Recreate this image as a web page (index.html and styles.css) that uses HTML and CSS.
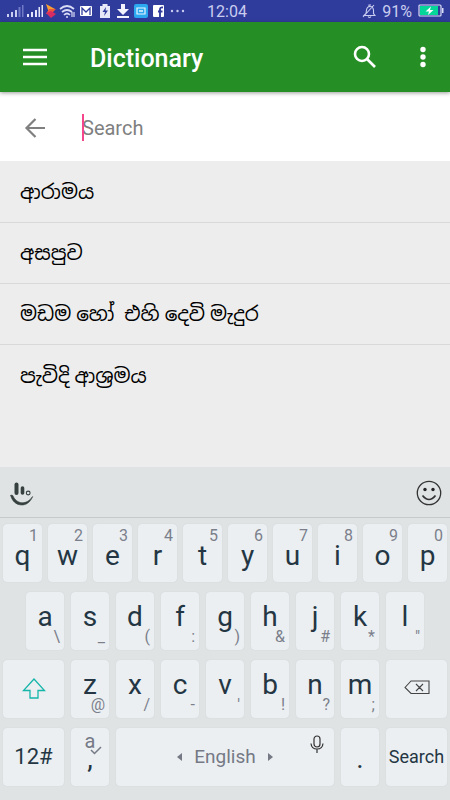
FILE: index.html
```html
<!DOCTYPE html>
<html lang="en">
<head>
<meta charset="utf-8">
<meta name="viewport" content="width=device-width, initial-scale=1">
<title>Dictionary</title>
<link rel="stylesheet" href="styles.css">
</head>
<body>
<div class="status">
  <div class="status-icons">
    <svg width="19" height="16" viewBox="0 0 19 16"><path fill="#c9cdf0" d="M1 11h2v3H1zM5 9h2v5H5zM9 7h2v7H9z"/><path fill="#6f79c6" d="M12.500 4h2v10h-2zM16 2h1.500v12H16z"/></svg>
    <svg width="18" height="16" viewBox="0 0 18 16"><path fill="#e4e7fb" d="M1 11h2v3H1zM5 9h2v5H5zM9 7h2v7H9zM12.500 4h1.500v10h-1.500zM15.500 2h1.500v12h-1.500z"/></svg>
    <svg width="12" height="16" viewBox="0 0 12 16"><path fill="#f6a033" d="M1 1l9 5-6 4z"/><path fill="#f0583a" d="M4 6l7 0-4 4-6 1z"/><path fill="#d92c63" d="M1 10l5-2 5 3-5 4z"/></svg>
    <svg width="19" height="16" viewBox="0 0 19 16" fill="none" stroke="#d9dcf5" stroke-width="1.700"><path d="M2 6Q9 0 16 6M4 9q5-4 10 0M6 12q3-3 6 0"/><circle cx="9" cy="14" r="1" fill="#d9dcf5" stroke="none"/><path stroke-width="1.200" d="M14 9v5M16 9v5"/></svg>
    <svg width="18" height="16" viewBox="0 0 18 16"><rect x="2" y="3" width="12" height="10" rx="1" fill="#fff"/><path d="M4 12V5l4 4 4-4v7" fill="none" stroke="#303c9c" stroke-width="1.300"/></svg>
    <svg width="17" height="16" viewBox="0 0 17 16"><path fill="#e6e8f8" d="M5.500 1h5v2H13v12H3V3h2.500z"/><path fill="#303c9c" d="M9 4L5.500 9H8l-1 4 4-5.500H8.500z"/></svg>
    <svg width="17" height="16" viewBox="0 0 17 16"><path fill="#f2f3fc" d="M6 1h4v5h4l-6 6-6-6h4zM2 13h12v2H2z"/></svg>
    <svg width="18" height="16" viewBox="0 0 18 16"><rect x="1" y="1" width="14" height="14" rx="2" fill="#2ba8f0"/><path d="M4 5h8v6H4z" fill="none" stroke="#e7f6ff" stroke-width="1.200"/><path d="M6 8h4" stroke="#e7f6ff" stroke-width="1.500"/></svg>
    <svg width="15" height="16" viewBox="0 0 15 16"><rect x="1" y="2" width="11" height="12" rx="1" fill="#fff"/><path d="M11 4.500q-3-.5-3 2V14M6 8.500h4.500" fill="none" stroke="#303c9c" stroke-width="1.900"/></svg>
    <svg width="22" height="16" viewBox="0 0 22 16" fill="#c9cdf0"><circle cx="4" cy="8" r="1.200"/><circle cx="9.500" cy="8" r="1.200"/><circle cx="15" cy="8" r="1.200"/></svg>
  </div>
  <time class="clock">12:04</time>
  <div class="status-right">
    <svg width="14" height="16" viewBox="0 0 14 16" fill="none" stroke="#c9cdf0" stroke-width="1.100"><path d="M2 12.500h11l-1.500-2V7Q11 3.500 8 3.500 5 3.500 4.500 7L4 10.500zM7 3.500V2h2M6 13.500q1.500 2 3 0M1 14L12 2"/></svg>
    <span>91%</span>
    <svg width="26" height="14" viewBox="0 0 26 14"><rect x="1" y="1" width="22" height="11" rx="1" fill="#303c9c" stroke="#d9dcf5" stroke-width="1.200"/><path fill="#05d598" d="M2 2h18v9H2z"/><path fill="#d9dcf5" d="M24 4h1.500v5H24z"/><path fill="#fff" d="M13 2.500L7.500 7.500H11l-1 3.500 5.500-5H12z"/></svg>
  </div>
</div>

<header class="appbar">
  <button class="icon-btn" aria-label="Menu"><svg width="24" height="24" viewBox="0 0 24 24" stroke="#fff" stroke-width="2.300"><path d="M0 5h24M0 12h24M0 19h24"/></svg></button>
  <h1>Dictionary</h1>
  <button class="icon-btn" aria-label="Search"><svg width="24" height="24" viewBox="0 0 24 24" fill="none" stroke="#fff" stroke-width="2.600"><circle cx="9" cy="9" r="7"/><path d="M14 14l8 8"/></svg></button>
  <button class="icon-btn more" aria-label="More options"><svg width="8" height="24" viewBox="0 0 8 24" fill="#fff"><circle cx="4" cy="4.500" r="2.700"/><circle cx="4" cy="12" r="2.700"/><circle cx="4" cy="19.500" r="2.700"/></svg></button>
</header>

<form class="searchbar">
  <button class="icon-btn" type="button" aria-label="Back"><svg width="22" height="22" viewBox="0 0 22 22" fill="none" stroke="#808080" stroke-width="2.200"><path d="M21 11H2.500M11.500 2L2.500 11l9 9"/></svg></button>
  <input class="search-input" type="text" placeholder="Search" aria-label="Search">
</form>

<ul class="results" lang="si">
  <li>ආරාමය</li>
  <li>අසපුව</li>
  <li>මඩම හෝ&nbsp; එහි දෙවි මැදුර</li>
  <li>පැවිදි ආශ්‍රමය</li>
</ul>

<section class="keyboard" aria-label="Keyboard">
  <div class="tools">
    <button class="icon-btn" aria-label="Keyboard settings"><svg width="24" height="26" viewBox="0 0 24 26" fill="none" stroke="#35403f" stroke-linecap="round"><path stroke-width="4" d="M6.500 4.500v8.500"/><path stroke-width="3.600" d="M12.500 8v5"/><circle cx="18.200" cy="13" r="1.900" stroke-width="1.100"/><path fill="#35403f" stroke-width=".6" d="M.8 15.500C3 27 18 29 22.600 16.500 17 25 7 25 2.800 15.500Q1.700 14.500.8 15.500z"/></svg></button>
    <button class="icon-btn" aria-label="Emoji"><svg width="26" height="26" viewBox="0 0 26 26" fill="none" stroke="#333" stroke-width="1.300"><circle cx="13" cy="13" r="11.700"/><circle cx="9" cy="9.500" r="1.700" fill="#222" stroke="none"/><circle cx="17" cy="9.500" r="1.700" fill="#222" stroke="none"/><path stroke-width="1.700" d="M6.500 15.500q6.500 8 13 0"/></svg></button>
  </div>
  <div class="keys">
    <div class="row top">
      <button class="key"><small>1</small><span>q</span></button>
      <button class="key"><small>2</small><span>w</span></button>
      <button class="key"><small>3</small><span>e</span></button>
      <button class="key"><small>4</small><span>r</span></button>
      <button class="key"><small>5</small><span>t</span></button>
      <button class="key"><small>6</small><span>y</span></button>
      <button class="key"><small>7</small><span>u</span></button>
      <button class="key"><small>8</small><span>i</span></button>
      <button class="key"><small>9</small><span>o</span></button>
      <button class="key"><small>0</small><span>p</span></button>
    </div>
    <div class="row home">
      <button class="key"><span>a</span><small>\</small></button>
      <button class="key"><span>s</span><small>_</small></button>
      <button class="key"><span>d</span><small>(</small></button>
      <button class="key"><span>f</span><small>:</small></button>
      <button class="key"><span>g</span><small>)</small></button>
      <button class="key"><span>h</span><small>&amp;</small></button>
      <button class="key"><span>j</span><small>#</small></button>
      <button class="key"><span>k</span><small>*</small></button>
      <button class="key"><span>l</span><small>"</small></button>
    </div>
    <div class="row">
      <button class="key wide" aria-label="Shift"><svg width="24" height="22" viewBox="0 0 24 22" fill="none" stroke="#16b5aa" stroke-width="1.300"><path d="M12 1L1.500 12.500H8V20h8v-7.500h6.500z"/></svg></button>
      <button class="key"><span>z</span><small>@</small></button>
      <button class="key"><span>x</span><small>/</small></button>
      <button class="key"><span>c</span><small>-</small></button>
      <button class="key"><span>v</span><small>'</small></button>
      <button class="key"><span>b</span><small>!</small></button>
      <button class="key"><span>n</span><small>?</small></button>
      <button class="key"><span>m</span><small>;</small></button>
      <button class="key wide" aria-label="Backspace"><svg width="26" height="18" viewBox="0 0 26 18" fill="none" stroke="#444" stroke-width="1.100"><path d="M1 7.500L7 1h18v12.500H7zM12 4l7 7M19 4l-7 7"/></svg></button>
    </div>
    <div class="row">
      <button class="key wide symbols">12#</button>
      <button class="key comma"><span class="alt">a<svg width="12" height="9" viewBox="0 0 12 9" fill="none" stroke="#757985" stroke-width="1.500"><path d="M1 4l3.500 3.500L11 1"/></svg></span><span>,</span></button>
      <button class="key space">
        <svg width="6" height="8" viewBox="0 0 6 8" fill="#757985"><path d="M5 0v8L0 4z"/></svg>
        English
        <svg width="6" height="8" viewBox="0 0 6 8" fill="#757985"><path d="M1 0v8l5-4z"/></svg>
        <svg class="mic" width="14" height="18" viewBox="0 0 14 18" fill="none" stroke="#333" stroke-width="1.200"><rect x="4" y="1" width="6" height="11" rx="3"/><path d="M1 8.500q.5 5.500 6 5.500t6-5.500M7 14v4"/></svg>
      </button>
      <button class="key period"><span>.</span></button>
      <button class="key wide enter">Search</button>
    </div>
  </div>
</section>
</body>
</html>
```
FILE: styles.css
```css
* {
  box-sizing: border-box;
}

body {
  margin: 0;
  min-height: 100vh;
  display: flex;
  flex-direction: column;
  background: #ededed;
  font-family: Roboto, "Noto Sans", sans-serif;
}

svg {
  display: block;
  flex: none;
}

button,
input {
  font: inherit;
  border: 0;
  padding: 0;
  background: none;
}

.status {
  height: 22px;
  padding: 0 6px;
  display: grid;
  grid-template-columns: 1fr auto 1fr;
  align-items: center;
  background: #303c9c;
  color: #c9cdf0;
  font-size: 16px;
}

.clock {
  padding-left: 4px;
}

.status-icons,
.status-right {
  display: flex;
  align-items: center;
}

.status-icons {
  gap: 1px;
  width: 0;
}

.status-right {
  gap: 6px;
  justify-content: flex-end;
}

.appbar {
  height: 70px;
  padding: 0 23px;
  display: flex;
  align-items: center;
  background: #258e25;
  color: #fff;
  box-shadow: 0 1px 4px rgba(0, 0, 0, 0.4);
  z-index: 1;
}

.appbar h1 {
  flex: 1;
  margin: 4px 0 0 43px;
  font-size: 25px;
  line-height: 28px;
  font-weight: 500;
}

.more {
  margin-left: 42px;
}

.searchbar {
  height: 69px;
  padding: 2px 24px 0;
  display: flex;
  align-items: center;
  gap: 36px;
  background: #fff;
}

.search-input {
  flex: 1;
  min-width: 0;
  height: 27px;
  border-left: 2px solid #f5458c;
  border-radius: 0;
  outline: 0;
  font-size: 20px;
  color: #222;
  text-indent: -2px;
}

.search-input::placeholder {
  color: #808080;
  opacity: 1;
}

.results {
  flex: 1;
  margin: 0;
  padding: 1px 0 0;
  list-style: none;
  color: #000;
  font-family: Roboto, "Noto Sans Sinhala", "Noto Sans", sans-serif;
  font-size: 20px;
}

.results li {
  height: 61px;
  padding: 0 20px;
  display: flex;
  align-items: center;
  border-bottom: 1px solid #d9d9d9;
}

.results li:last-child {
  border-bottom: 0;
}

.keyboard {
  background: #dfe3e4;
}

.tools {
  height: 51px;
  padding: 2px 8px 0 10px;
  display: flex;
  align-items: center;
  justify-content: space-between;
  border-bottom: 1px solid #c5cacb;
}

.keys {
  padding: 6px 3px 14px;
  display: grid;
  gap: 10px;
}

.row {
  display: flex;
  gap: 7px;
}

.top {
  gap: 6px;
}

.home {
  padding: 0 23px;
}

.key {
  flex: 38 1 0;
  min-width: 0;
  height: 58px;
  padding: 13px 0 0;
  display: flex;
  flex-direction: column;
  align-items: center;
  justify-content: flex-start;
  border-radius: 4px;
  background: #ebeff2;
  box-shadow: 0 0 1px #c4cacc;
  color: #243643;
  font-size: 28px;
  line-height: 24px;
}

.key small {
  align-self: flex-end;
  margin-right: 4px;
  color: #7b7f8b;
  font-size: 16px;
  line-height: 16px;
}

.top .key {
  padding-top: 4px;
}

.key.wide {
  flex-grow: 61;
  padding: 0;
  justify-content: center;
}

.key.symbols {
  font-size: 22px;
}

.key.enter {
  font-size: 18px;
}

.key.space {
  flex-grow: 218;
  padding: 0;
  position: relative;
  flex-direction: row;
  align-items: center;
  justify-content: center;
  gap: 11px;
  color: #757985;
  font-size: 19px;
}

.mic {
  position: absolute;
  top: 7px;
  right: 10px;
}

.key.comma {
  padding-top: 5px;
}

.alt {
  position: relative;
  height: 14px;
  color: #757985;
  font-size: 20px;
  line-height: 16px;
}

.alt svg {
  position: absolute;
  left: 5px;
  top: 13px;
}

.key.period {
  padding-top: 19px;
}
```
